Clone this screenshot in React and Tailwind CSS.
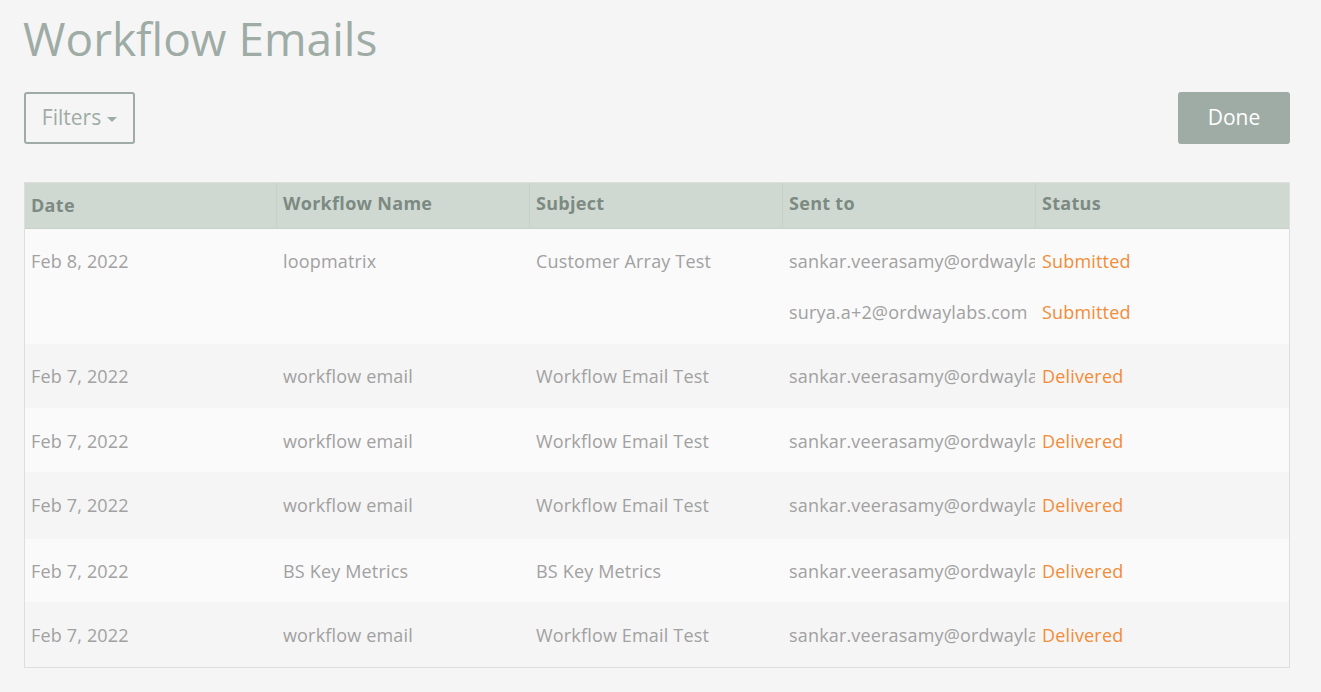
const rows = [
  { date: 'Feb 7, 2022', name: 'workflow email', subject: 'Workflow Email Test', h: 'h-16', bg: 'bg-[#f5f5f5]' },
  { date: 'Feb 7, 2022', name: 'workflow email', subject: 'Workflow Email Test', h: 'h-16 pt-[2px]', bg: 'bg-[#fafafa]' },
  { date: 'Feb 7, 2022', name: 'workflow email', subject: 'Workflow Email Test', h: 'h-[67px]', bg: 'bg-[#f5f5f5]' },
  { date: 'Feb 7, 2022', name: 'BS Key Metrics', subject: 'BS Key Metrics', h: 'h-[63px] pt-[2px]', bg: 'bg-[#fafafa]' },
  { date: 'Feb 7, 2022', name: 'workflow email', subject: 'Workflow Email Test', h: 'h-[65px] pt-[2px]', bg: 'bg-[#f5f5f5]' },
];

const headers = ['Date', 'Workflow Name', 'Subject', 'Sent to', 'Status'];
const email = 'sankar.veerasamy@ordwaylabs.com';

function Email({ children }) {
  return <div className="overflow-hidden whitespace-nowrap pl-[7px]">{children}</div>;
}

export default function App() {
  return (
    <div className="h-[692px] overflow-hidden bg-[#f5f5f5] pl-6 pr-[31px] font-['Open_Sans',sans-serif] text-[18px] tracking-[0.17px] text-[#a1a1a1]">
      <h1 className="-ml-px h-[92px] pt-2 text-[46px] leading-[60px] tracking-normal text-[#9eaca5]">Workflow Emails</h1>

      <div className="flex items-start justify-between">
        <button type="button" className="flex h-[52px] w-[111px] items-center justify-center gap-[6px] rounded-[3px] border-2 border-[#9eaca5] text-[21px] tracking-normal text-[#9eaca5]">
          Filters
          <span className="mt-[2px] h-0 w-0 border-x-[5px] border-t-[5px] border-x-transparent border-t-[#9eaca5]" />
        </button>
        <button type="button" className="h-[52px] w-28 rounded-[3px] bg-[#9eaca5] text-[21px] tracking-normal text-white">Done</button>
      </div>

      <div className="mt-[38px] border border-[#dcdfdd]">
        <div className="grid h-[46px] grid-cols-[251px_253px_253px_253px_1fr] border-b border-[#c6d1c9] bg-[#cfd9d1] font-bold tracking-[0.3px] text-[#7d8a83]">
          {headers.map((h, i) => (
            <div key={h} className={`flex items-center ${i === 0 ? 'px-[6px]' : 'border-l border-[#c6d1c9] px-[6px] pb-[5px]'}`}>{h}</div>
          ))}
        </div>

        <div className="grid h-[115px] grid-cols-[251px_253px_253px_253px_1fr] bg-[#fafafa] pt-[19px]">
          <div className="px-[6px]">Feb 8, 2022</div>
          <div className="px-[7px]">loopmatrix</div>
          <div className="px-[7px]">Customer Array Test</div>
          <div className="flex flex-col gap-6">
            <Email>{email}</Email>
            <Email>surya.a+2@ordwaylabs.com</Email>
          </div>
          <div className="flex flex-col gap-6 px-[7px] text-[#f28c38]">
            <div>Submitted</div>
            <div>Submitted</div>
          </div>
        </div>

        {rows.map((r, i) => (
          <div key={i} className={`grid grid-cols-[251px_253px_253px_253px_1fr] items-center ${r.h} ${r.bg}`}>
            <div className="px-[6px]">{r.date}</div>
            <div className="px-[7px]">{r.name}</div>
            <div className="px-[7px]">{r.subject}</div>
            <Email>{email}</Email>
            <div className="px-[7px] text-[#f28c38]">Delivered</div>
          </div>
        ))}
      </div>
    </div>
  );
}
